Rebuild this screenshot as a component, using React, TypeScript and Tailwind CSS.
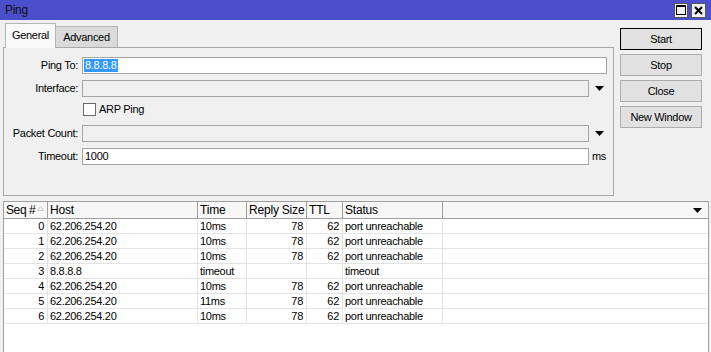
import React from "react";

const rows = [
  ["0", "62.206.254.20", "10ms", "78", "62", "port unreachable"],
  ["1", "62.206.254.20", "10ms", "78", "62", "port unreachable"],
  ["2", "62.206.254.20", "10ms", "78", "62", "port unreachable"],
  ["3", "8.8.8.8", "timeout", "", "", "timeout"],
  ["4", "62.206.254.20", "10ms", "78", "62", "port unreachable"],
  ["5", "62.206.254.20", "11ms", "78", "62", "port unreachable"],
  ["6", "62.206.254.20", "10ms", "78", "62", "port unreachable"],
];

function DownArrow({ className = "" }: { className?: string }) {
  return (
    <svg width="9" height="5" viewBox="0 0 9 5" className={className}>
      <path d="M0 0 H9 L4.5 5 Z" fill="#000" />
    </svg>
  );
}

function Field({
  label,
  children,
  className = "",
}: {
  label: string;
  children: React.ReactNode;
  className?: string;
}) {
  return (
    <div className={"flex items-center h-[17px] " + className}>
      <div className="w-[75px] text-right pr-px">{label}</div>
      <div className="ml-[3px] flex items-center">{children}</div>
    </div>
  );
}

export default function App() {
  return (
    <div className="w-[711px] h-[352px] overflow-hidden bg-[#f0f0f0] flex flex-col text-[11px] tracking-[-0.3px] text-black font-['Liberation_Sans',Arial,sans-serif]">
      {/* title bar */}
      <div className="h-[20px] bg-[#4b4fcb] flex items-center justify-between pl-[5px] pr-[5px] shrink-0">
        <span className="text-[12px] text-[#111]">Ping</span>
        <div className="flex gap-[3px]">
          <div className="w-[14px] h-[15px] bg-[#f0f0f0] border border-[#555] flex items-center justify-center">
            <svg width="10" height="10" viewBox="0 0 10 10">
              <rect x="0.5" y="0.5" width="9" height="9" fill="none" stroke="#000" />
              <rect x="0" y="0" width="10" height="2" fill="#000" />
            </svg>
          </div>
          <div className="w-[15px] h-[15px] bg-[#f0f0f0] border border-[#555] flex items-center justify-center">
            <svg width="9" height="9" viewBox="0 0 9 9">
              <path d="M1 1 L8 8 M8 1 L1 8" stroke="#000" strokeWidth="2" />
            </svg>
          </div>
        </div>
      </div>

      {/* top section */}
      <div className="flex pl-[3px] pt-[3px] shrink-0">
        <div className="w-[611px] flex flex-col">
          <div className="h-[24px] flex items-end pl-[2px]">
            <div className="relative z-10 -mb-px h-[25px] w-[51px] bg-[#f9f9f9] border border-b-0 border-[#b4b4b4] flex items-center justify-center pb-px">
              General
            </div>
            <div className="h-[21px] w-[62px] bg-[#dadada] border border-l-0 border-b-0 border-[#b4b4b4] flex items-center justify-center">
              Advanced
            </div>
          </div>
          <div className="h-[149px] border border-[#a8a8a8] bg-[#f0f0f0] pt-[9px]">
            <Field label="Ping To:">
              <div className="w-[525px] h-[17px] bg-white border border-[#a5a5a5] flex items-center pl-px">
                <span className="bg-[#3399ff] text-white px-px leading-[13px]">8.8.8.8</span>
              </div>
            </Field>
            <Field label="Interface:" className="mt-[6px]">
              <div className="w-[507px] h-[17px] bg-[#f0f0f0] border border-[#a5a5a5]" />
              <DownArrow className="ml-[6px]" />
            </Field>
            <div className="flex items-start h-[15px] mt-[6px] pl-[79px]">
              <div className="w-[13px] h-[13px] bg-white border border-[#6a6a6a]" />
              <span className="ml-[3px] leading-[13px]">ARP Ping</span>
            </div>
            <Field label="Packet Count:" className="mt-[7px]">
              <div className="w-[507px] h-[17px] bg-[#f0f0f0] border border-[#a5a5a5]" />
              <DownArrow className="ml-[6px]" />
            </Field>
            <Field label="Timeout:" className="mt-[6px]">
              <div className="w-[507px] h-[17px] bg-white border border-[#a5a5a5] flex items-center pl-[2px]">
                1000
              </div>
              <span className="ml-[3px]">ms</span>
            </Field>
          </div>
        </div>

        <div className="ml-[6px] mt-[5px] flex flex-col gap-[4px]">
          {["Start", "Stop", "Close", "New Window"].map((b, i) => (
            <div
              key={b}
              className={
                "w-[82px] h-[22px] bg-[#e1e1e1] border flex items-center justify-center " +
                (i === 0 ? "border-black" : "border-[#adadad]")
              }
            >
              {b}
            </div>
          ))}
        </div>
      </div>

      {/* table */}
      <div className="mt-[5px] ml-[3px] w-[706px] flex-1 bg-white border border-b-0 border-[#a0a0a0]">
        <div className="grid grid-cols-[44px_150px_49px_60px_36px_100px_1fr]">
          <div className="h-[17px] bg-[#f7f7f7] border-r border-b border-[#a0a0a0] flex items-center pl-[2px] text-[12px] tracking-[-0.4px] overflow-hidden whitespace-nowrap">
            Seq #
            <svg width="7" height="5" viewBox="0 0 7 5" className="ml-[2px] mb-[3px] shrink-0">
              <path d="M0.5 4.5 H6.5 L3.5 0.5 Z" fill="none" stroke="#c8c8c8" />
            </svg>
          </div>
          {["Host", "Time", "Reply Size", "TTL", "Status"].map((h) => (
            <div
              key={h}
              className="h-[17px] bg-[#f7f7f7] border-r border-b border-[#a0a0a0] flex items-center pl-[2px] text-[12px] tracking-[-0.2px]"
            >
              {h}
            </div>
          ))}
          <div className="h-[17px] bg-[#f7f7f7] border-b border-[#a0a0a0] flex items-center justify-end pr-[6px]">
            <DownArrow />
          </div>

          {rows.map((r) => (
            <React.Fragment key={r[0]}>
              <div className="h-[15px] border-r border-b border-[#e3e3e3] text-right pr-[3px] leading-[14px]">{r[0]}</div>
              <div className="h-[15px] border-r border-b border-[#e3e3e3] pl-[2px] leading-[14px]">{r[1]}</div>
              <div className="h-[15px] border-r border-b border-[#e3e3e3] pl-[2px] leading-[14px]">{r[2]}</div>
              <div className="h-[15px] border-r border-b border-[#e3e3e3] text-right pr-[3px] leading-[14px]">{r[3]}</div>
              <div className="h-[15px] border-r border-b border-[#e3e3e3] text-right pr-[3px] leading-[14px]">{r[4]}</div>
              <div className="h-[15px] border-r border-b border-[#e3e3e3] pl-[2px] leading-[14px]">{r[5]}</div>
              <div className="h-[15px] border-b border-[#e3e3e3]" />
            </React.Fragment>
          ))}
        </div>
      </div>
    </div>
  );
}
